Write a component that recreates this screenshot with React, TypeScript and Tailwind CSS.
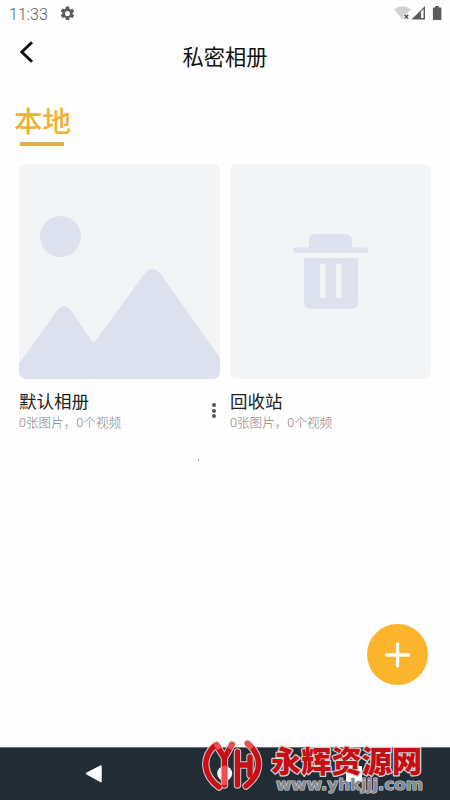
import React from "react";

function StatusBar() {
  return (
    <div className="flex h-7 items-center pl-[9px] pr-[8px] text-[#5c5c5c]">
      <span className="w-[50px] pt-px font-['Roboto',sans-serif] text-[16px] font-light leading-7">11:33</span>
      <svg className="-mt-px h-[17px] w-[17px]" viewBox="0 0 24 24" fill="currentColor">
        <path d="M19.14 12.94c.04-.3.06-.61.06-.94s-.02-.64-.07-.94l2.03-1.58a.49.49 0 0 0 .12-.61l-1.92-3.32a.49.49 0 0 0-.59-.22l-2.39.96a7 7 0 0 0-1.62-.94l-.36-2.54A.48.48 0 0 0 13.92 2h-3.84c-.24 0-.43.17-.47.41l-.36 2.54c-.59.24-1.13.57-1.62.94l-2.39-.96a.48.48 0 0 0-.59.22L2.74 8.47a.48.48 0 0 0 .12.61l2.03 1.58a7.8 7.8 0 0 0 0 1.88l-2.03 1.58a.49.49 0 0 0-.12.61l1.92 3.32c.12.22.37.29.59.22l2.39-.96c.5.38 1.03.7 1.62.94l.36 2.54c.05.24.24.41.48.41h3.84c.24 0 .44-.17.47-.41l.36-2.54a7 7 0 0 0 1.62-.94l2.39.96c.22.08.47 0 .59-.22l1.92-3.32a.48.48 0 0 0-.12-.61zM12 15.6a3.6 3.6 0 1 1 0-7.2 3.6 3.6 0 0 1 0 7.2" />
      </svg>
      <svg className="ml-auto h-7 w-[50px]" viewBox="392 0 50 28">
        <path d="M394 9.3Q402.500 3 411 9.300L406.500 14.200H403.500V18.500L402.500 19.500Z" fill="#d2d2d2" />
        <path d="M404.500 14.800l3.800 3.800m0-3.800l-3.800 3.800" stroke="#4c4c4c" strokeWidth="1.300" />
        <path d="M425 6v13.500h-13.500z" fill="#5c5c5c" />
        <path d="M421 11.500l2.600-2.600v9.200H421z" fill="#f4f4f4" />
        <path d="M433.200 7.500h2V6h3.500v1.500h2.300q.4 0 .4.500v11.500q0 .5-.5.5h-7.500q-.5 0-.5-.5V8q0-.5.3-.5z" fill="#5c5c5c" />
      </svg>
    </div>
  );
}

function Header() {
  return (
    <header className="grid h-[58px] grid-cols-[60px_1fr_60px]">
      <button aria-label="返回" className="flex pl-[18px] pt-[12px]">
        <svg className="h-6 w-4" viewBox="0 0 16 24" fill="none" stroke="#111" strokeWidth="2.900">
          <path d="M14 2.200L3.800 12l10.200 9.800" />
        </svg>
      </button>
      <h1 className="pt-[15px] text-center text-[21.200px] leading-[30px] text-[#111]">私密相册</h1>
    </header>
  );
}

function Mountains() {
  return (
    <svg className="h-full w-full" viewBox="0 0 201 215" preserveAspectRatio="none" fill="#dde1ed">
      <circle cx="41.500" cy="72.500" r="20.500" />
      <path d="M0 200L38 146.500Q45 138 52 146.500L74.500 179.500L126 109Q133.500 101 141 109L201 194V215H0Z" />
    </svg>
  );
}

function Trash() {
  return (
    <svg className="h-full w-full" viewBox="230 164 201 215" fill="#dde1ed">
      <path d="M309 247.500V241q0-7 7-7h29q7 0 7 7v6.500h14.500q2 0 2 2.700t-2 2.700h-71q-2 0-2-2.700t2-2.700z" />
      <path fillRule="evenodd" d="M306 258h50q2 0 2 2v42q0 7-7 7h-40q-7 0-7-7v-42q0-2 2-2zm16.800 5.500q-2.800 0-2.800 2.800v29.400q0 2.800 2.800 2.800t2.800-2.800v-29.400q0-2.800-2.800-2.800zm16 0q-2.800 0-2.800 2.800v29.400q0 2.800 2.800 2.800t2.800-2.800v-29.400q0-2.800-2.800-2.800z" />
    </svg>
  );
}

function Album({ name, children, menu }: { name: string; children: React.ReactNode; menu?: boolean }) {
  return (
    <article className="w-[201px]">
      <div className="h-[215px] overflow-hidden rounded-[7px] bg-[#f2f4f6]">{children}</div>
      <div className="flex justify-between pt-[12px]">
        <div>
          <h2 className="text-[17.500px] leading-[23px] text-[#222]">{name}</h2>
          <p className="text-[12.600px] font-light leading-[18px] text-[#858585]">0张图片，0个视频</p>
        </div>
        {menu && (
          <button aria-label="更多" className="mr-[4px] mt-[12px] flex h-[15px] flex-col justify-between">
            <i className="h-1 w-1 rounded-full bg-[#555]" />
            <i className="h-1 w-1 rounded-full bg-[#555]" />
            <i className="h-1 w-1 rounded-full bg-[#555]" />
          </button>
        )}
      </div>
    </article>
  );
}

function LogoStrokes() {
  return (
    <>
      <path d="M214.500 746C202 757 202.500 775 219 787" />
      <path d="M216.500 745L224.500 758L232 744.500M224.500 758V785" />
      <path d="M237.500 752V785M238 765H250M250 757V775" />
      <path d="M247.500 743.500C262.500 756 262.500 773 246 786" />
    </>
  );
}

function Watermark() {
  return (
    <svg className="pointer-events-none absolute bottom-0 left-[200px] h-[62px] w-[230px]" viewBox="200 738 230 62">
      <g fill="none" strokeLinecap="round" strokeLinejoin="round">
        <g stroke="#d1cdd1" strokeWidth="7.400"><LogoStrokes /></g>
        <g stroke="#c90f16" strokeWidth="5.400"><LogoStrokes /></g>
      </g>
      <path d="M216.500 745l1.300 2M232 744.500l-1.300 2.500M247.500 743.500l3 3M224.500 768v15" fill="none" stroke="#f24d50" strokeWidth="5" strokeLinecap="round" />
      <text x="271" y="771.500" textLength="151" className="font-['Noto_Sans_CJK_SC',sans-serif] text-[30px] font-black" fill="#c70d14" stroke="#d5d1d4" strokeWidth="2.500" strokeLinejoin="round" paintOrder="stroke">永辉资源网</text>
      <text x="276" y="789.500" textLength="147" lengthAdjust="spacingAndGlyphs" className="font-['DejaVu_Sans',sans-serif] text-[15px] font-bold" fill="#83898f" stroke="#d0d3d6" strokeWidth="1.200" strokeLinejoin="round" paintOrder="stroke">www.yhkjjj.com</text>
    </svg>
  );
}

export default function App() {
  return (
    <div className="relative flex h-[800px] w-[450px] flex-col overflow-hidden bg-[#fefefe] font-['Roboto','Noto_Sans_CJK_SC',sans-serif]">
      <StatusBar />
      <Header />
      <main className="flex flex-1 flex-col">
        <nav className="pl-[14px] pt-[17px]">
          <button className="block text-[28.500px] font-medium leading-[40px] text-[#edb137]">本地</button>
          <div className="-mt-px ml-[6px] h-[4px] w-[44px] bg-[#e5b04a]" />
        </nav>
        <section className="flex gap-[10px] pl-[19px] pt-[18px]">
          <Album name="默认相册" menu><Mountains /></Album>
          <Album name="回收站"><Trash /></Album>
        </section>
        <i className="ml-[198px] mt-[28px] h-px w-px bg-[#555]" />
        <button aria-label="添加" className="mb-[62px] ml-auto mr-[22px] mt-auto flex h-[61px] w-[61px] items-center justify-center rounded-full bg-[#fbb42b]">
          <svg className="h-7 w-7" viewBox="0 0 28 28" fill="none" stroke="#fff" strokeWidth="3.300" strokeLinecap="round">
            <path d="M13.500 3v22M2.500 14h22" />
          </svg>
        </button>
      </main>
      <footer className="flex h-[53px] items-center border-t border-[#71787c] bg-[#222c34]">
        <svg className="h-full w-full" viewBox="0 748 450 52" fill="#fcfefe">
          <path d="M86.500 773.500L101 766V781.500Z" stroke="#fcfefe" strokeWidth="1.500" strokeLinejoin="round" />
          <circle cx="224.700" cy="773.500" r="7.500" />
          <rect x="346" y="766" width="16" height="16" rx="1" />
        </svg>
      </footer>
      <Watermark />
    </div>
  );
}
